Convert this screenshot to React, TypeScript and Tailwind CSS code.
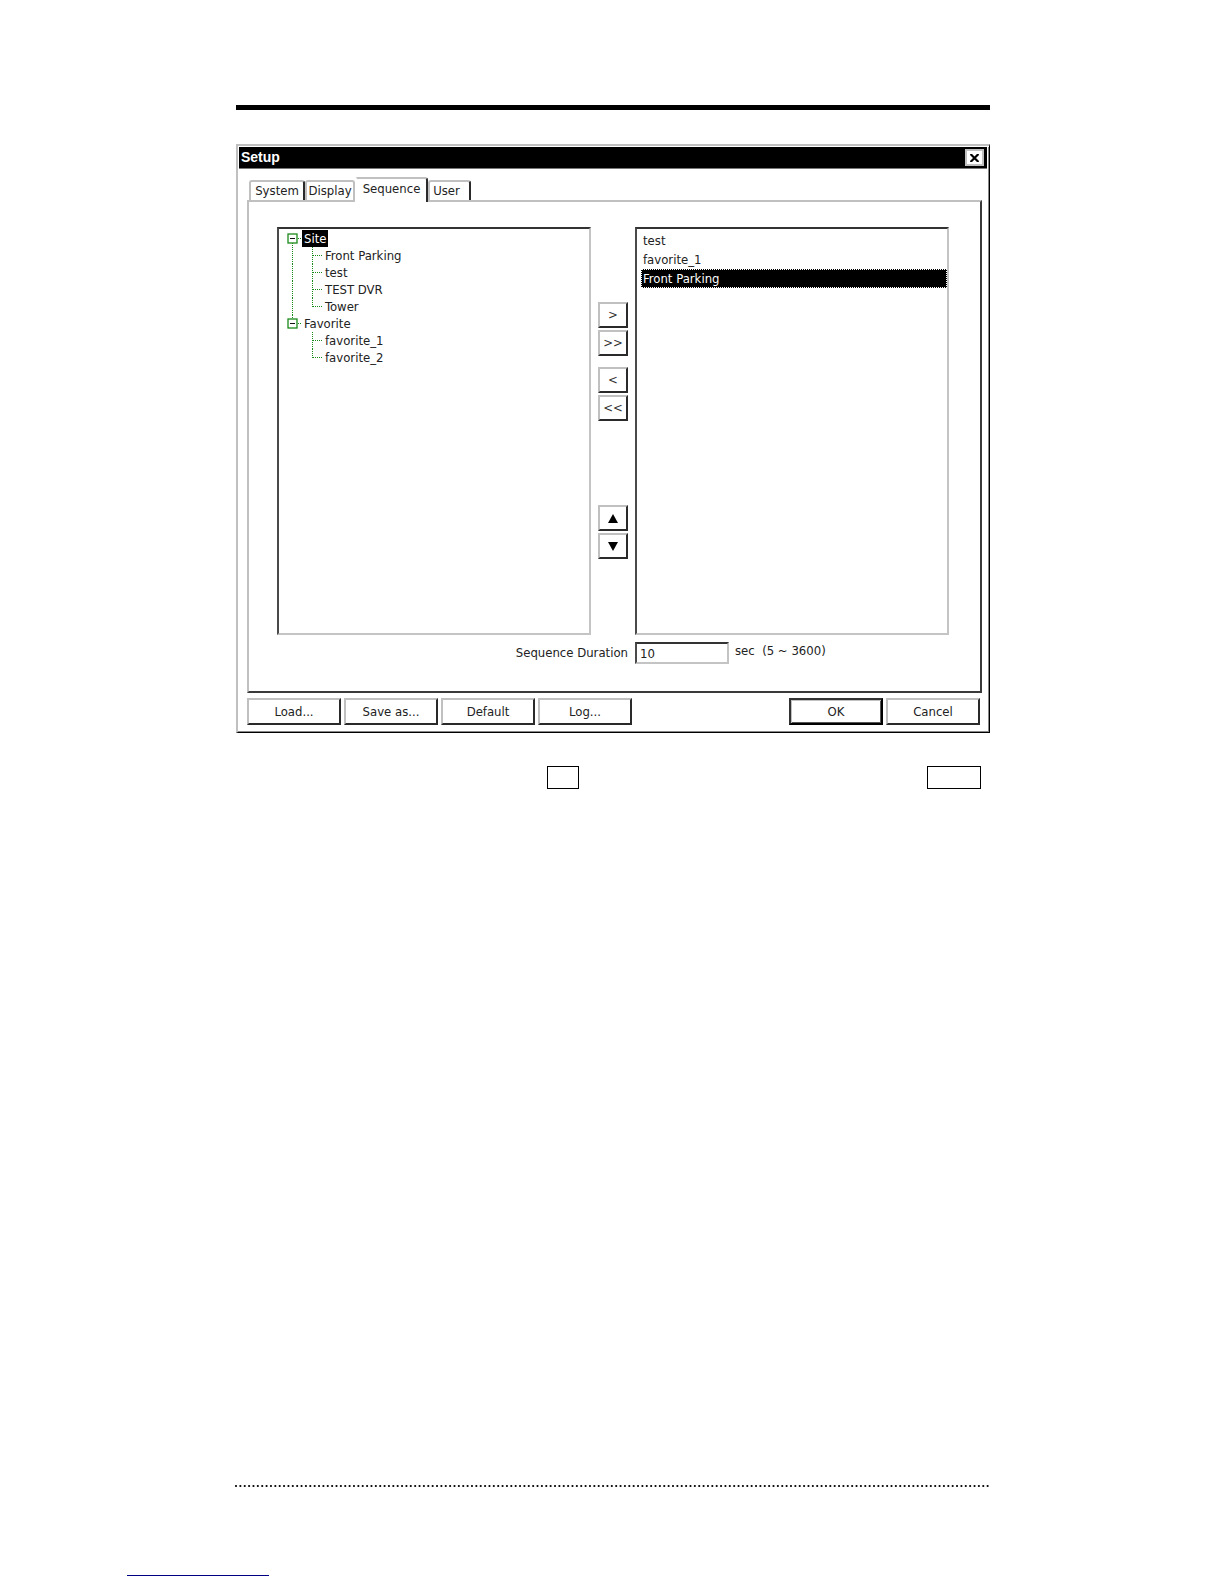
import { useState, type ReactNode } from "react";
import clsx from "clsx";

const tabs = [
  { name: "System", className: "w-[56px]" },
  { name: "Display", className: "w-[50px]" },
  { name: "Sequence", className: "w-[73px]" },
  { name: "User", className: "w-[43px]" },
];

const tree = [
  { name: "Site", children: ["Front Parking", "test", "TEST DVR", "Tower"] },
  { name: "Favorite", children: ["favorite_1", "favorite_2"] },
];

const sequence = ["test", "favorite_1", "Front Parking"];

const raised =
  "border-2 border-t-[#c0c0c0] border-l-[#c0c0c0] border-r-[#2a2a2a] border-b-[#2a2a2a] bg-white";
const sunken =
  "border-2 border-t-[#333] border-l-[#4a4a4a] border-r-[#c4c4c4] border-b-[#c4c4c4] bg-white";

function PushButton({ children, isDefault }: { children: ReactNode; isDefault?: boolean }) {
  return (
    <button
      type="button"
      className={clsx(
        "h-[27px] w-[94px] text-center",
        isDefault
          ? "border-2 border-t-[#333] border-l-[#333] border-r-black border-b-black shadow-[inset_1px_1px_0_#c0c0c0,inset_-1px_-1px_0_#555]"
          : raised
      )}
    >
      {children}
    </button>
  );
}

function MoveButton({ label, children }: { label: string; children: ReactNode }) {
  return (
    <button
      type="button"
      aria-label={label}
      className={clsx("flex h-[26px] w-[30px] items-center justify-center text-[#333]", raised)}
    >
      {children}
    </button>
  );
}

function ParentGuide({ first }: { first: boolean }) {
  return (
    <svg width="23" height="17" className="shrink-0" fill="none" stroke="#1a8a1a">
      <path d={first ? "M13.5 13V17" : "M13.5 0V3"} strokeDasharray="1 1" />
      <rect x="9" y="4" width="9" height="9" strokeWidth="1.3" />
      <path d="M11 8.5H16" stroke="#111" />
      <path d="M19 8.5H23" strokeDasharray="1 1" />
    </svg>
  );
}

function ChildGuide({ trunk, last }: { trunk: boolean; last: boolean }) {
  return (
    <svg width="44" height="17" className="shrink-0" fill="none" stroke="#1a8a1a" strokeDasharray="1 1">
      {trunk && <path d="M13.5 0V17" />}
      <path d={last ? "M33.5 0V9" : "M33.5 0V17"} />
      <path d="M34 8.5H43" />
    </svg>
  );
}

function SiteTree() {
  return (
    <ul role="tree" aria-label="Sites" className={clsx("h-[408px] min-w-0 pt-px", sunken)}>
      {tree.map((group, g) => (
        <li key={group.name} role="treeitem" aria-expanded="true" aria-selected={g === 0}>
          <div className="flex h-[17px] items-center">
            <ParentGuide first={g === 0} />
            <span className={clsx("px-[2px] leading-[17px]", g === 0 && "bg-black text-white")}>
              {group.name}
            </span>
          </div>
          <ul role="group">
            {group.children.map((child, i) => (
              <li key={child} role="treeitem" aria-selected="false" className="flex h-[17px] items-center">
                <ChildGuide trunk={g === 0} last={i === group.children.length - 1} />
                <span className="px-[2px] leading-[17px]">{child}</span>
              </li>
            ))}
          </ul>
        </li>
      ))}
    </ul>
  );
}

function SequenceList() {
  const [selected, setSelected] = useState("Front Parking");

  return (
    <ul role="listbox" aria-label="Sequence" className={clsx("h-[408px] min-w-0 pt-[2px] pl-1", sunken)}>
      {sequence.map((item) => (
        <li
          key={item}
          role="option"
          aria-selected={item === selected}
          onClick={() => setSelected(item)}
          className={clsx(
            "h-[19px] border border-dotted px-px leading-[17px]",
            item === selected ? "border-white bg-black text-white" : "border-transparent"
          )}
        >
          {item}
        </li>
      ))}
    </ul>
  );
}

function SetupDialog() {
  const [active, setActive] = useState("Sequence");
  const [duration, setDuration] = useState("10");

  return (
    <section
      aria-label="Setup"
      className="border-t-2 border-r border-b border-l-2 border-t-[#c0c0c0] border-r-black border-b-black border-l-[#c0c0c0]"
    >
      <div className="border-r border-b border-[#888] pb-[6px]">
        {/* Title bar */}
        <header className="mx-px mt-px flex h-[22px] items-center justify-between border-b border-[#777] bg-black pr-[3px] pl-[2px]">
          <h1 className="font-['Liberation_Sans'] text-[14px] font-bold text-white">Setup</h1>
          <button
            type="button"
            aria-label="Close"
            className="flex h-[17px] w-[19px] items-center justify-center border-2 border-[#c0c0c0] bg-white"
          >
            <svg width="9" height="8" viewBox="0 0 9 8" stroke="black" strokeWidth="2.2">
              <path d="M0.5 0L8.5 8M8.5 0L0.5 8" />
            </svg>
          </button>
        </header>

        <div className="pt-2 pr-[6px] pl-[9px]">
          {/* Tabs */}
          <div role="tablist" className="flex items-end pl-[2px]">
            {tabs.map(({ name, className }) => (
              <button
                key={name}
                type="button"
                role="tab"
                aria-selected={name === active}
                onClick={() => setActive(name)}
                className={clsx(
                  "rounded-t-[3px] border-t-2 border-r-2 border-l-2 border-[#c0c0c0] text-center leading-[18px]",
                  name !== "Display" && "border-r-[#2a2a2a]",
                  name === active
                    ? "-mb-[2px] h-[25px] border-l-white bg-white pb-[4px]"
                    : "h-[20px]",
                  name === "User" && "pr-[6px]",
                  className
                )}
              >
                {name}
              </button>
            ))}
          </div>

          {/* Tab panel */}
          <div
            role="tabpanel"
            className="border-2 border-t-[#c0c0c0] border-r-[#3a3a3a] border-b-[#3a3a3a] border-l-[#c0c0c0] pt-[25px] pr-[31px] pb-[27px] pl-7"
          >
            <div className="grid grid-cols-[1fr_30px_1fr] gap-x-[7px]">
              <SiteTree />
              <div className="flex flex-col gap-[2px] pt-[75px]">
                <MoveButton label="Add">&gt;</MoveButton>
                <MoveButton label="Add all">&gt;&gt;</MoveButton>
                <div className="mt-[9px] flex flex-col gap-[2px]">
                  <MoveButton label="Remove">&lt;</MoveButton>
                  <MoveButton label="Remove all">&lt;&lt;</MoveButton>
                </div>
                <div className="mt-[82px] flex flex-col gap-[2px]">
                  <MoveButton label="Move up">
                    <svg width="10" height="9" fill="black">
                      <path d="M5 0L10 9H0Z" />
                    </svg>
                  </MoveButton>
                  <MoveButton label="Move down">
                    <svg width="10" height="9" fill="black">
                      <path d="M0 0H10L5 9Z" />
                    </svg>
                  </MoveButton>
                </div>
              </div>
              <SequenceList />

              <label htmlFor="duration" className="col-span-2 mt-[7px] text-right leading-[22px]">
                Sequence Duration
              </label>
              <div className="mt-[7px] flex gap-[6px]">
                <input
                  id="duration"
                  value={duration}
                  onChange={(e) => setDuration(e.target.value)}
                  className={clsx("h-[22px] w-[94px] px-[3px]", sunken)}
                />
                <span className="leading-[18px] whitespace-pre">sec  (5 ~ 3600)</span>
              </div>
            </div>
          </div>

          {/* Actions */}
          <footer className="mt-[5px] flex justify-between pr-[2px]">
            <div className="flex gap-[3px]">
              <PushButton>Load...</PushButton>
              <PushButton>Save as...</PushButton>
              <PushButton>Default</PushButton>
              <PushButton>Log...</PushButton>
            </div>
            <div className="flex gap-[3px]">
              <PushButton isDefault>OK</PushButton>
              <PushButton>Cancel</PushButton>
            </div>
          </footer>
        </div>
      </div>
    </section>
  );
}

export default function App() {
  return (
    <div className="flex min-h-screen flex-col bg-white pt-[105px] pb-2 font-['DejaVu_Sans_Condensed','DejaVu_Sans',sans-serif] text-[13px] text-[#222]">
      <main className="mx-auto w-full max-w-[756px] pl-[2px]">
        <div className="mb-[34px] h-[5px] bg-black" />
        <SetupDialog />
        <div className="mt-[33px] flex justify-end pr-[9px]">
          <div className="h-[23px] w-8 border border-black" />
          <div className="w-[348px]" />
          <div className="h-[23px] w-[54px] border border-black" />
        </div>
      </main>

      <div className="mx-auto mt-auto w-full max-w-[760px]">
        <svg width="100%" height="4" className="block">
          <line x1="4" y1="2" x2="100%" y2="2" stroke="black" strokeWidth="2.2" strokeLinecap="round" strokeDasharray="0 4.37" />
        </svg>
      </div>
      <div className="mt-[87px] ml-[127px] h-px w-[142px] bg-[#000080]" />
    </div>
  );
}
